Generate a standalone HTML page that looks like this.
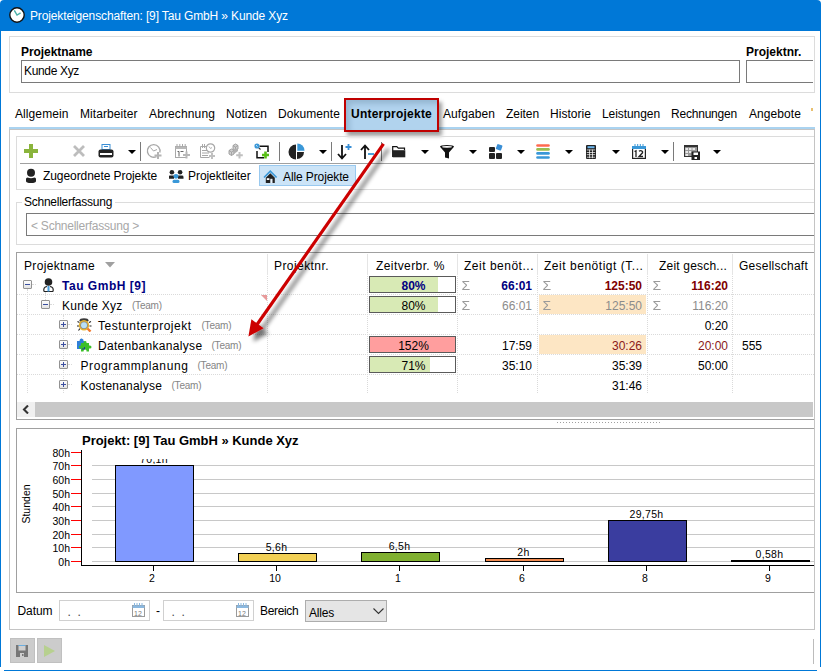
<!DOCTYPE html>
<html><head><meta charset="utf-8">
<style>
*{box-sizing:border-box;margin:0;padding:0}
html,body{width:821px;height:671px;overflow:hidden;background:#fff}
body{position:relative;font-family:"Liberation Sans",sans-serif;font-size:12px;color:#000}
.a{position:absolute}
.t{position:absolute;white-space:nowrap;line-height:14px}
.b{font-weight:bold}
.dd{position:absolute;width:0;height:0;border-left:4px solid transparent;border-right:4px solid transparent;border-top:4px solid #000}
.sep{position:absolute;width:1px;height:19px;background:#7a7a7a;top:142px}
.pb{position:absolute;width:9px;height:9px;border:1px solid #929292;background:linear-gradient(#fdfdfd,#e3e3e3);border-radius:1px}
.pb:before{content:"";position:absolute;left:1px;top:3px;width:5px;height:1px;background:#3b4fa0}
.pb.p:after{content:"";position:absolute;left:3px;top:1px;width:1px;height:5px;background:#3b4fa0}
.tm{position:absolute;white-space:nowrap;font-size:10px;color:#858585;line-height:12px}
.hd{position:absolute;top:254px;height:21px;width:1px;background:#e5e5e5}
.vd{position:absolute;width:1px;border-left:1px dotted #dadada}
.hdot{position:absolute;height:1px;border-top:1px dotted #dadada}
.gl{position:absolute;left:92px;width:722px;height:1px;background:#c8c8c8}
.yl{position:absolute;left:40px;width:30px;text-align:right;font-size:10.5px;line-height:12px}
.tk{position:absolute;left:71px;width:10px;height:1px;background:#ff0000}
.bar{position:absolute;border:1px solid #000}
.xl{position:absolute;top:572px;font-size:10.5px;line-height:12px;width:40px;text-align:center}
.vl{position:absolute;font-size:10.5px;line-height:12px;width:60px;text-align:center}
.xt{position:absolute;top:565px;width:1px;height:6px;background:#000}
.sg{position:absolute;font-size:14px;line-height:14px;color:#9a9a9a;transform:scaleY(0.93)}
</style></head>
<body>
<div class="a" style="left:0;top:0;width:821px;height:31px;background:#0078d7;border-radius:4px 4px 0 0"></div>
<svg class="a" style="left:8px;top:6px" width="18" height="18" viewBox="0 0 18 18"><circle cx="9" cy="9" r="7.2" fill="#fff" stroke="#111" stroke-width="1.4"/><path d="M6.3 4.4 L9 9.1 L12.6 6.8" fill="none" stroke="#4ab0a8" stroke-width="1.4"/></svg>
<div class="t" style="left:30px;top:9px;letter-spacing:-0.13px;color:#fff">Projekteigenschaften: [9] Tau GmbH » Kunde Xyz</div>
<div class="a" style="left:0;top:31px;width:1px;height:636px;background:#0078d7"></div>
<div class="a" style="left:820px;top:31px;width:1px;height:636px;background:#0078d7"></div>
<div class="a" style="left:4px;top:670px;width:813px;height:1px;background:#0078d7"></div>
<div class="a" style="left:813px;top:639px;width:1px;height:25px;background:#bcbcbc"></div>
<div class="a" style="left:9px;top:36px;width:806px;height:57px;border:1px solid #dcdcdc"></div>
<div class="t b" style="left:21px;top:45px;letter-spacing:-0.06px;">Projektname</div>
<div class="a" style="left:21px;top:60px;width:719px;height:23px;border:1px solid #7a7a7a"></div>
<div class="t" style="left:24px;top:64px;letter-spacing:-0.34px;">Kunde Xyz</div>
<div class="t b" style="left:746px;top:45px;">Projektnr.</div>
<div class="a" style="left:746px;top:60px;width:67px;height:23px;border:1px solid #7a7a7a;border-right:none"></div>
<div class="t" style="left:15px;top:107px;letter-spacing:0.09px;">Allgemein</div>
<div class="t" style="left:80px;top:107px;letter-spacing:0.07px;">Mitarbeiter</div>
<div class="t" style="left:149px;top:107px;letter-spacing:0.13px;">Abrechnung</div>
<div class="t" style="left:226px;top:107px;letter-spacing:0.04px;">Notizen</div>
<div class="t" style="left:278px;top:107px;letter-spacing:0.07px;">Dokumente</div>
<div class="t" style="left:443px;top:107px;letter-spacing:0.08px;">Aufgaben</div>
<div class="t" style="left:506px;top:107px;letter-spacing:-0.06px;">Zeiten</div>
<div class="t" style="left:550px;top:107px;letter-spacing:0.04px;">Historie</div>
<div class="t" style="left:602px;top:107px;letter-spacing:-0.07px;">Leistungen</div>
<div class="t" style="left:671px;top:107px;letter-spacing:-0.21px;">Rechnungen</div>
<div class="t" style="left:749px;top:107px;letter-spacing:0.08px;">Angebote</div>
<div class="a" style="left:811px;top:108px;width:2px;height:3px;background:#e8c070"></div>
<div class="a" style="left:9px;top:127px;width:806px;height:503px;border:1px solid #c4c4c4;border-top:3px solid #c4c4c4"></div><div class="a" style="left:9px;top:127px;width:806px;height:2px;background:#aad3f0"></div>
<div class="a" style="left:344px;top:98px;width:95px;height:34px;border:2px solid #c00000;background:#b1d3ee;box-shadow:3px 4px 4px rgba(0,0,0,.38), inset 4px 4px 5px rgba(60,90,120,.22)"></div>
<div class="t b" style="left:351px;top:107px;letter-spacing:0.23px;">Unterprojekte</div>
<div class="a" style="left:16px;top:136px;width:798px;height:54px;border:1px solid #dcdcdc;border-right:none"></div>
<div class="a" style="left:20px;top:163px;width:794px;height:1px;background:#a0a0a0"></div>
<svg class="a" style="left:24px;top:144px" width="14" height="14"><rect x="5" y="0" width="4" height="14" fill="#8ab43c"/><rect x="0" y="5" width="14" height="4" fill="#8ab43c"/></svg>
<svg class="a" style="left:73px;top:145px" width="12" height="12"><path d="M1 1L11 11M11 1L1 11" stroke="#bdbdbd" stroke-width="2.8"/></svg>
<svg class="a" style="left:98px;top:144px" width="16" height="15" viewBox="0 0 16 15"><rect x="4" y="0.5" width="8" height="5" fill="#fff" stroke="#3a8fd6" stroke-width="1"/><line x1="6" y1="2.5" x2="10" y2="2.5" stroke="#3a8fd6"/><rect x="0.5" y="5.5" width="15" height="8" rx="2" fill="#222"/><rect x="2" y="9" width="12" height="2" fill="#fff"/></svg>
<div class="dd" style="left:128px;top:150px"></div>
<div class="sep" style="left:140px"></div>
<svg class="a" style="left:146px;top:143px" width="16" height="16" viewBox="0 0 16 16"><path d="M10.5 13.6A6.3 6.3 0 1 1 13.8 9.5" fill="none" stroke="#a8a8a8" stroke-width="1.4"/><path d="M4.5 4.5L7.5 8L11 6.5" fill="none" stroke="#a8a8a8" stroke-width="1"/><path d="M12 9v7M8.5 12.5h7" stroke="#b4b4b4" stroke-width="2"/></svg>
<svg class="a" style="left:175px;top:143px" width="15" height="16" viewBox="0 0 15 16"><rect x="0.5" y="3.5" width="11" height="11" fill="#fff" stroke="#a8a8a8"/><rect x="0.5" y="3.5" width="11" height="2.5" fill="#b8b8b8"/><path d="M2 1v3M4.8 1v3M7.5 1v3M10.2 1v3" stroke="#a8a8a8"/><path d="M2.5 8.5h1.5v5M5.5 8.5h3" fill="none" stroke="#666" stroke-width="1"/><path d="M11.5 8.5v7M8 12h7" stroke="#b8b8b8" stroke-width="2"/></svg>
<svg class="a" style="left:200px;top:143px" width="16" height="16" viewBox="0 0 16 16"><path d="M0.5 3.5H9.5M0.5 3.5V14.5H9.5" fill="none" stroke="#a8a8a8"/><path d="M2.5 1v4M4.5 1v4" stroke="#a8a8a8"/><path d="M2 7.5h6M2 10h7M2 12.5h6" stroke="#a8a8a8"/><circle cx="10.5" cy="5" r="4.2" fill="#fff" stroke="#a8a8a8" stroke-width="1.2"/><path d="M9 3.5L10.5 5.5L12 4.5" fill="none" stroke="#a8a8a8" stroke-width="0.9"/><path d="M12 10v6M9 13h6" stroke="#c0c0c0" stroke-width="2"/></svg>
<svg class="a" style="left:228px;top:143px" width="15" height="16" viewBox="0 0 15 16"><path d="M5 2.5L7.5 1L10 2.5V6L7.5 7.5L5 6Z" fill="#d0d0d0" stroke="#9a9a9a" stroke-width="0.9"/><path d="M5 2.5L7.5 4L10 2.5M7.5 4V7.5" fill="none" stroke="#9a9a9a" stroke-width="0.8"/><path d="M1 7.5L3.5 6L6 7.5V11L3.5 12.5L1 11Z" fill="#d0d0d0" stroke="#9a9a9a" stroke-width="0.9"/><path d="M1 7.5L3.5 9L6 7.5M3.5 9V12.5" fill="none" stroke="#9a9a9a" stroke-width="0.8"/><path d="M5.5 6.5L8 5.5L10 6V8L6 11Z" fill="#b0b0b0"/><path d="M11.5 9v6.5M8.2 12.2h6.6" stroke="#c0c0c0" stroke-width="2"/></svg>
<svg class="a" style="left:254px;top:143px" width="16" height="16" viewBox="0 0 16 16"><path d="M5.5 3.2H14V9M10 14.8H3V8" fill="none" stroke="#111" stroke-width="1.5"/><circle cx="3" cy="3" r="2.6" fill="#3a98d8"/><path d="M2 2.2L3.5 3.5" stroke="#fff" stroke-width="0.8"/><path d="M4.8 4.8L6.5 6.5" stroke="#333" stroke-width="1.2"/><path d="M11.5 8.5v7M8 12h7" stroke="#5ac018" stroke-width="2.6"/></svg>
<div class="sep" style="left:279px"></div>
<svg class="a" style="left:288px;top:143px" width="17" height="17" viewBox="0 0 17 17"><path d="M8 9V16.5A7.5 7.5 0 0 1 8 1.5Z" fill="#222"/><path d="M9 9H16A7 7 0 0 1 9 16Z" fill="#222"/><path d="M9.3 7.7V0.5A7.2 7.2 0 0 1 16.5 7.7Z" fill="#3a98d8"/></svg>
<div class="dd" style="left:319px;top:150px"></div>
<div class="sep" style="left:331px"></div>
<svg class="a" style="left:337px;top:144px" width="15" height="16" viewBox="0 0 15 16"><path d="M5 1V14M1 10L5 14.5L9 10" fill="none" stroke="#111" stroke-width="1.8"/><path d="M11.5 0v6M8.5 3h6" stroke="#3a8fd6" stroke-width="1.8"/></svg>
<svg class="a" style="left:360px;top:144px" width="15" height="16" viewBox="0 0 15 16"><path d="M5 2V15M1 6L5 1.5L9 6" fill="none" stroke="#111" stroke-width="1.8"/><path d="M8 10h6" stroke="#3a98d8" stroke-width="1.8"/></svg>
<div class="sep" style="left:381px"></div>
<svg class="a" style="left:392px;top:145px" width="14" height="13" viewBox="0 0 14 13"><path d="M0.7 12V1.7H4.8L6.3 3.2H12.5V5" fill="none" stroke="#111" stroke-width="1.2"/><path d="M0.7 5.2H13.3V12.3H0.7Z" fill="#222"/></svg>
<div class="dd" style="left:421px;top:150px"></div>
<svg class="a" style="left:440px;top:145px" width="14" height="14" viewBox="0 0 14 14"><path d="M0 1.8Q0 0 7 0Q14 0 14 1.8L9 7.5V13.5L5 12.5V7.5Z" fill="#111"/><ellipse cx="7" cy="1.8" rx="5" ry="0.9" fill="#fff"/></svg>
<div class="dd" style="left:469px;top:150px"></div>
<svg class="a" style="left:489px;top:144px" width="14" height="15" viewBox="0 0 14 15"><rect x="0" y="3" width="6" height="5" rx="1" fill="#222"/><rect x="0" y="9" width="6" height="6" rx="1" fill="#222"/><rect x="7" y="9" width="6" height="6" rx="1" fill="#222"/><rect x="7.5" y="0.5" width="5.5" height="5.5" rx="1" fill="#3a8fd6" transform="rotate(20 10 3)"/></svg>
<div class="dd" style="left:517px;top:150px"></div>
<svg class="a" style="left:536px;top:144px" width="14" height="15" viewBox="0 0 14 15"><g stroke-width="2.6" stroke-linecap="round"><path d="M1.5 1.5H12.5" stroke="#ff6a50"/><path d="M1.5 5.4H12.5" stroke="#9abd50"/><path d="M1.5 9.4H12.5" stroke="#3a98d8"/><path d="M1.5 13.5H12.5" stroke="#3a98d8"/></g></svg>
<div class="dd" style="left:565px;top:150px"></div>
<svg class="a" style="left:586px;top:145px" width="10" height="14" viewBox="0 0 10 14"><rect x="0" y="0" width="10" height="14" rx="1" fill="#222"/><rect x="1.5" y="1.2" width="7" height="2" fill="#6ab4ec"/><g fill="#fff"><rect x="0.8" y="4.6" width="8.4" height="0.7"/><rect x="0.8" y="7" width="8.4" height="0.7"/><rect x="0.8" y="9.4" width="8.4" height="0.7"/><rect x="0.8" y="11.8" width="8.4" height="0.7"/><rect x="3.2" y="4.6" width="0.7" height="8.6"/><rect x="6.1" y="4.6" width="0.7" height="8.6"/></g></svg>
<div class="dd" style="left:612px;top:150px"></div>
<svg class="a" style="left:632px;top:144px" width="14" height="15" viewBox="0 0 14 15"><rect x="0.6" y="2.6" width="12.8" height="11.8" fill="#fff" stroke="#222" stroke-width="1.2"/><rect x="0" y="2" width="14" height="3" fill="#3a98d8"/><path d="M3 0v3M5.7 0v3M8.3 0v3M11 0v3" stroke="#3a98d8" stroke-width="1"/><path d="M2.5 7.5L4 6.8V13M7 7.3Q8 6.5 9.5 6.8Q11 7.3 10.5 8.8L7 12.5H11" fill="none" stroke="#222" stroke-width="1.3"/></svg>
<div class="dd" style="left:661px;top:150px"></div>
<div class="sep" style="left:673px"></div>
<svg class="a" style="left:684px;top:145px" width="16" height="15" viewBox="0 0 16 15"><rect x="0.5" y="0.5" width="13" height="11" fill="#9a9a9a" stroke="#333"/><rect x="0.5" y="0.5" width="13" height="1.6" fill="#333"/><g fill="#e8e8e8"><rect x="1.5" y="3" width="2.5" height="2"/><rect x="5" y="3" width="2.5" height="2"/><rect x="8.5" y="3" width="2.5" height="2"/><rect x="1.5" y="6" width="2.5" height="2"/><rect x="5" y="6" width="2.5" height="2"/><rect x="1.5" y="9" width="2.5" height="2"/></g><rect x="7.5" y="6.5" width="8.5" height="8.5" fill="#222"/><rect x="9.5" y="7.5" width="4.5" height="2.5" fill="#fff"/><rect x="10.5" y="12" width="2.5" height="2" fill="#fff"/></svg>
<div class="dd" style="left:713px;top:150px"></div>
<svg class="a" style="left:25px;top:168px" width="12" height="16" viewBox="0 0 12 16"><circle cx="6" cy="4.8" r="4" fill="#222"/><path d="M1 11Q1 9.8 2.5 9.6Q6 10.8 9.5 9.6Q11 9.8 11 11V13Q11 15 6 15Q1 15 1 13Z" fill="#222"/></svg>
<div class="t" style="left:43px;top:169px;letter-spacing:-0.07px;">Zugeordnete Projekte</div>
<svg class="a" style="left:169px;top:168px" width="15" height="15" viewBox="0 0 15 15"><circle cx="2.9" cy="4.2" r="2.3" fill="#222"/><circle cx="11.1" cy="4.2" r="2.3" fill="#222"/><path d="M-0.5 10.7V9Q-0.5 7.6 1 7.6H5V10.7Z M9 7.6H13Q14.5 7.6 14.5 9V10.7H9Z" fill="#222"/><circle cx="7" cy="8.3" r="2.4" fill="#3a98d8"/><path d="M3.5 13.5Q3.5 11.8 5 11.8H9Q10.5 11.8 10.5 13.5Q10.5 15 9 15H5Q3.5 15 3.5 13.5Z" fill="#3a98d8"/></svg>
<div class="t" style="left:188px;top:169px;letter-spacing:-0.06px;">Projektleiter</div>
<div class="a" style="left:259px;top:165px;width:97px;height:21px;background:#cce4f7;border:1px solid #99c9ef"></div>
<svg class="a" style="left:263px;top:170px" width="15" height="13" viewBox="0 0 15 13"><path d="M1 7.5L7.3 1.2L13.6 7.5" fill="none" stroke="#3a98d8" stroke-width="1.6"/><path d="M2.8 7.8L7.3 3.2L11.8 7.8V13H2.8Z" fill="#222"/><rect x="3.8" y="8.2" width="2.6" height="1.8" fill="#fff"/><rect x="7.3" y="8.8" width="2.2" height="4.2" fill="#e8f2fb"/></svg>
<div class="t" style="left:283px;top:170px;letter-spacing:-0.11px;">Alle Projekte</div>
<div class="a" style="left:16px;top:202px;width:798px;height:43px;border:1px solid #dcdcdc;border-right:none"></div>
<div class="a" style="left:22px;top:195px;width:93px;height:12px;background:#fff"></div>
<div class="t" style="left:24px;top:195px;letter-spacing:-0.25px;">Schnellerfassung</div>
<div class="a" style="left:26px;top:213px;width:788px;height:23px;border:1px solid #7a7a7a;border-right:none"></div>
<div class="t" style="left:31px;top:219px;letter-spacing:-0.24px;color:#a8a8a8">&lt; Schnellerfassung &gt;</div>
<div class="a" style="left:16px;top:252px;width:798px;height:168px;border:1px solid #a0a0a0;border-right:none"></div>
<div class="t" style="left:24px;top:259px;letter-spacing:0.33px;">Projektname</div>
<svg class="a" style="left:105px;top:262px" width="10" height="6"><path d="M0 0H10L5 5.5Z" fill="#a0a0a0"/></svg>
<div class="t" style="left:274px;top:259px;letter-spacing:0.43px;">Projektnr.</div>
<div class="t" style="left:376px;top:259px;letter-spacing:0.41px;">Zeitverbr. %</div>
<div class="t" style="left:464px;top:259px;letter-spacing:0.51px;">Zeit benöt...</div>
<div class="t" style="left:544px;top:259px;letter-spacing:0.53px;">Zeit benötigt (T...</div>
<div class="t" style="left:659px;top:259px;letter-spacing:0.20px;">Zeit gesch...</div>
<div class="t" style="left:739px;top:259px;letter-spacing:0.25px;">Gesellschaft</div>
<div class="hd" style="left:267px"></div>
<div class="vd" style="left:267px;top:276px;height:117px"></div>
<div class="hd" style="left:367px"></div>
<div class="vd" style="left:367px;top:276px;height:117px"></div>
<div class="hd" style="left:457px"></div>
<div class="vd" style="left:457px;top:276px;height:117px"></div>
<div class="hd" style="left:537px"></div>
<div class="vd" style="left:537px;top:276px;height:117px"></div>
<div class="hd" style="left:647px"></div>
<div class="vd" style="left:647px;top:276px;height:117px"></div>
<div class="hd" style="left:732px"></div>
<div class="vd" style="left:732px;top:276px;height:117px"></div>
<div class="hdot" style="left:17px;top:294px;width:797px"></div>
<div class="hdot" style="left:17px;top:314px;width:797px"></div>
<div class="hdot" style="left:17px;top:334px;width:797px"></div>
<div class="hdot" style="left:17px;top:354px;width:797px"></div>
<div class="hdot" style="left:17px;top:374px;width:797px"></div>
<div class="a" style="left:539px;top:295px;width:107px;height:19px;background:#fde6c4"></div>
<div class="a" style="left:539px;top:335px;width:107px;height:19px;background:#fde6c4"></div>
<div class="vd" style="left:27px;top:289px;height:104px"></div>
<div class="vd" style="left:45px;top:292px;height:8px"></div>
<div class="vd" style="left:63px;top:315px;height:78px"></div>
<div class="hdot" style="left:32px;top:284px;width:4px"></div>
<div class="hdot" style="left:50px;top:304px;width:4px"></div>
<div class="pb p" style="left:59px;top:320px"></div>
<div class="hdot" style="left:68px;top:324px;width:4px"></div>
<div class="pb p" style="left:59px;top:340px"></div>
<div class="hdot" style="left:68px;top:344px;width:4px"></div>
<div class="pb p" style="left:59px;top:360px"></div>
<div class="hdot" style="left:68px;top:364px;width:4px"></div>
<div class="pb p" style="left:59px;top:380px"></div>
<div class="hdot" style="left:68px;top:384px;width:4px"></div>
<div class="pb" style="left:23px;top:280px"></div>
<div class="pb" style="left:41px;top:300px"></div>
<svg class="a" style="left:43px;top:278px" width="11" height="14" viewBox="0 0 11 14"><circle cx="5.5" cy="4" r="3.8" fill="#222"/><path d="M1 13.5Q0 9 4 8.5M10 13.5Q11 9 7 8.5" fill="none" stroke="#222" stroke-width="1.2"/><path d="M1 13.5H10" stroke="#222" stroke-width="1"/><rect x="4.5" y="8" width="2" height="5.5" fill="#4aa0e0"/></svg>
<svg class="a" style="left:77px;top:318px" width="15" height="14" viewBox="0 0 15 14"><path d="M0.5 3.5L2.5 4.5M0 8H2M1.5 12.5L3 10.5M14 3.5L12 4.5M14.5 8H12.5" stroke="#222" stroke-width="1.1"/><ellipse cx="7" cy="2.2" rx="4.5" ry="2" fill="#3a3a3a"/><circle cx="7" cy="7.3" r="5.2" fill="#e8b430"/><circle cx="7" cy="7.3" r="3.8" fill="#8a8a8a"/><circle cx="7" cy="7.3" r="3" fill="#b8e0f8"/><path d="M10.5 10.5L13.5 13.5" stroke="#f07a30" stroke-width="2.4"/></svg>
<svg class="a" style="left:77px;top:338px" width="15" height="14" viewBox="0 0 15 14"><path d="M0 3H2.5Q2.5 0 4.8 0.5Q7 1 6.5 3H7.5V11H0Z" fill="#2f7fd8"/><path d="M4 5H6.5Q6.5 2.5 8.5 3Q10 3.5 9.5 5H12V7.5Q14.5 7 14.5 9Q14.5 11 12 10.5V13.5H9.5Q10 11.5 8 11.5Q6.5 11.5 6.5 13.5H4V10.5Q2 11 2 9Q2 7 4 7.5Z" fill="#3cc02a"/><path d="M5 11H7.5V9" fill="none" stroke="#1a3aa0" stroke-width="1"/></svg>
<div class="t b" style="left:62px;top:279px;letter-spacing:0.52px;color:#000080">Tau GmbH [9]</div>
<div class="t" style="left:62px;top:299px;letter-spacing:0.29px;">Kunde Xyz</div>
<div class="tm" style="left:132px;top:300px;letter-spacing:-0.22px;">(Team)</div>
<svg class="a" style="left:261px;top:295px" width="6" height="6"><path d="M0 0H6V6Z" fill="#e89a9a"/></svg>
<div class="t" style="left:98px;top:319px;letter-spacing:0.51px;">Testunterprojekt</div>
<div class="tm" style="left:201.5px;top:320px;letter-spacing:-0.22px;">(Team)</div>
<div class="t" style="left:98px;top:339px;letter-spacing:0.31px;">Datenbankanalyse</div>
<div class="tm" style="left:211.5px;top:340px;letter-spacing:-0.22px;">(Team)</div>
<div class="t" style="left:80.5px;top:359px;letter-spacing:0.62px;">Programmplanung</div>
<div class="tm" style="left:197.5px;top:360px;letter-spacing:-0.22px;">(Team)</div>
<div class="t" style="left:80.5px;top:379px;letter-spacing:0.22px;">Kostenanalyse</div>
<div class="tm" style="left:171.5px;top:380px;letter-spacing:-0.22px;">(Team)</div>
<div class="a" style="left:369px;top:276px;width:87px;height:17px;border:1px solid #5a5a5a;background:#fff"><div class="a" style="left:0;top:0;width:68px;height:15px;background:#d8eab5"></div></div>
<div class="t" style="left:371px;top:279px;width:85px;text-align:center;color:#000080;font-weight:bold">80%</div>
<div class="a" style="left:369px;top:296px;width:87px;height:17px;border:1px solid #5a5a5a;background:#fff"><div class="a" style="left:0;top:0;width:68px;height:15px;background:#d8eab5"></div></div>
<div class="t" style="left:371px;top:299px;width:85px;text-align:center;color:#000;">80%</div>
<div class="a" style="left:369px;top:336px;width:87px;height:17px;border:1px solid #5a5a5a;background:#fff"><div class="a" style="left:0;top:0;width:85px;height:15px;background:#ff9e9e"></div></div>
<div class="t" style="left:371px;top:339px;width:85px;text-align:center;color:#000;">152%</div>
<div class="a" style="left:369px;top:356px;width:87px;height:17px;border:1px solid #5a5a5a;background:#fff"><div class="a" style="left:0;top:0;width:60px;height:15px;background:#d8eab5"></div></div>
<div class="t" style="left:371px;top:359px;width:85px;text-align:center;color:#000;">71%</div>
<div class="sg" style="left:461.5px;top:278px">Σ</div>
<div class="sg" style="left:542.5px;top:278px">Σ</div>
<div class="sg" style="left:652.5px;top:278px">Σ</div>
<div class="sg" style="left:461.5px;top:298px">Σ</div>
<div class="sg" style="left:542.5px;top:298px">Σ</div>
<div class="sg" style="left:652.5px;top:298px">Σ</div>
<div class="t" style="left:432px;top:279px;width:100px;text-align:right;color:#000080;font-weight:bold">66:01</div>
<div class="t" style="left:542px;top:279px;width:100px;text-align:right;color:#800000;font-weight:bold">125:50</div>
<div class="t" style="left:628px;top:279px;width:100px;text-align:right;color:#800000;font-weight:bold">116:20</div>
<div class="t" style="left:432px;top:299px;width:100px;text-align:right;color:#8c8c8c;">66:01</div>
<div class="t" style="left:542px;top:299px;width:100px;text-align:right;color:#8c8c8c;">125:50</div>
<div class="t" style="left:628px;top:299px;width:100px;text-align:right;color:#8c8c8c;">116:20</div>
<div class="t" style="left:628px;top:319px;width:100px;text-align:right;color:#000;">0:20</div>
<div class="t" style="left:432px;top:339px;width:100px;text-align:right;color:#000;">17:59</div>
<div class="t" style="left:542px;top:339px;width:100px;text-align:right;color:#8b1a1a;">30:26</div>
<div class="t" style="left:628px;top:339px;width:100px;text-align:right;color:#8b1a1a;">20:00</div>
<div class="t" style="left:742px;top:339px;">555</div>
<div class="t" style="left:432px;top:359px;width:100px;text-align:right;color:#000;">35:10</div>
<div class="t" style="left:542px;top:359px;width:100px;text-align:right;color:#000;">35:39</div>
<div class="t" style="left:628px;top:359px;width:100px;text-align:right;color:#000;">50:00</div>
<div class="t" style="left:542px;top:379px;width:100px;text-align:right;color:#000;">31:46</div>
<div class="a" style="left:17px;top:402px;width:796px;height:15px;background:#c8c8c8"></div>
<div class="a" style="left:17px;top:402px;width:18px;height:15px;background:#f0f0f0"></div>
<svg class="a" style="left:22px;top:405px" width="8" height="9"><path d="M6 0.5L2 4.5L6 8.5" fill="none" stroke="#333" stroke-width="2.1"/></svg>
<div class="a" style="left:557px;top:422px;width:104px;height:1px;background:repeating-linear-gradient(90deg,#a0a0a0 0 1px,transparent 1px 3px)"></div>
<div class="a" style="left:16px;top:428px;width:798px;height:165px;border:1px solid #a0a0a0;border-right:none"></div>
<div class="tk" style="top:452px"></div>
<div class="yl" style="top:447px">80h</div>
<div class="gl" style="top:465px"></div>
<div class="tk" style="top:465px"></div>
<div class="yl" style="top:460px">70h</div>
<div class="gl" style="top:479px"></div>
<div class="tk" style="top:479px"></div>
<div class="yl" style="top:474px">60h</div>
<div class="gl" style="top:493px"></div>
<div class="tk" style="top:493px"></div>
<div class="yl" style="top:488px">50h</div>
<div class="gl" style="top:506px"></div>
<div class="tk" style="top:506px"></div>
<div class="yl" style="top:501px">40h</div>
<div class="gl" style="top:520px"></div>
<div class="tk" style="top:520px"></div>
<div class="yl" style="top:515px">30h</div>
<div class="gl" style="top:534px"></div>
<div class="tk" style="top:534px"></div>
<div class="yl" style="top:529px">20h</div>
<div class="gl" style="top:547px"></div>
<div class="tk" style="top:547px"></div>
<div class="yl" style="top:542px">10h</div>
<div class="gl" style="top:561px"></div>
<div class="tk" style="top:561px"></div>
<div class="yl" style="top:556px">0h</div>
<div class="a" style="left:81px;top:450px;width:1px;height:116px;background:#000"></div>
<div class="a" style="left:81px;top:565px;width:733px;height:1px;background:#000"></div>
<div class="t" style="left:6px;top:498px;width:40px;text-align:center;font-size:10.5px;line-height:12px;transform:rotate(-90deg)">Stunden</div>
<div class="bar" style="left:115px;top:465px;width:79px;height:97px;background:#8099ff"></div>
<div class="a" style="left:124px;top:459px;width:60px;height:5px;overflow:hidden"><div class="vl" style="left:0;top:-6px;letter-spacing:0.3px">70,1h</div></div>
<div class="xt" style="left:153px"></div>
<div class="xl" style="left:132.0px">2</div>
<div class="bar" style="left:238px;top:553px;width:79px;height:9px;background:#f2d055"></div>
<div class="vl" style="left:246.5px;top:541px;letter-spacing:0.3px">5,6h</div>
<div class="xt" style="left:276px"></div>
<div class="xl" style="left:255.0px">10</div>
<div class="bar" style="left:361px;top:552px;width:79px;height:10px;background:#80b030"></div>
<div class="vl" style="left:369.5px;top:540px;letter-spacing:0.3px">6,5h</div>
<div class="xt" style="left:399px"></div>
<div class="xl" style="left:378.0px">1</div>
<div class="bar" style="left:485px;top:558px;width:79px;height:4px;background:#f08a50"></div>
<div class="vl" style="left:493.5px;top:546px;letter-spacing:0.3px">2h</div>
<div class="xt" style="left:523px"></div>
<div class="xl" style="left:502.0px">6</div>
<div class="bar" style="left:608px;top:520px;width:79px;height:42px;background:#3a3d9f"></div>
<div class="vl" style="left:616.5px;top:508px;letter-spacing:0.3px">29,75h</div>
<div class="xt" style="left:646px"></div>
<div class="xl" style="left:625.0px">8</div>
<div class="bar" style="left:731px;top:560px;width:79px;height:2px;background:#000"></div>
<div class="vl" style="left:739.5px;top:548px;letter-spacing:0.3px">0,58h</div>
<div class="xt" style="left:769px"></div>
<div class="xl" style="left:748.0px">9</div>
<div class="t b" style="left:82px;top:432.5px;letter-spacing:-0.02px;font-size:13px;line-height:15px">Projekt: [9] Tau GmbH » Kunde Xyz</div>
<div class="t" style="left:17.5px;top:604px;letter-spacing:-0.07px;">Datum</div>
<div class="a" style="left:59px;top:600px;width:91px;height:21px;border:1px solid #d0d0d0"></div>
<div class="t" style="left:67.5px;top:605px;color:#444">.&nbsp;&nbsp;.</div>
<svg class="a" style="left:132px;top:603px" width="13" height="14" viewBox="0 0 13 14"><rect x="0.5" y="2.5" width="12" height="11" fill="#fff" stroke="#9a9a9a"/><rect x="0.5" y="2.5" width="12" height="2.5" fill="#8ab8e0"/><path d="M2.5 0v3M5 0v3M7.5 0v3M10 0v3" stroke="#8ab8e0"/><text x="2" y="12.5" font-size="7" fill="#7a7a7a" font-family="Liberation Sans">12</text></svg>
<div class="a" style="left:163px;top:600px;width:91px;height:21px;border:1px solid #d0d0d0"></div>
<div class="t" style="left:171.5px;top:605px;color:#444">.&nbsp;&nbsp;.</div>
<svg class="a" style="left:236px;top:603px" width="13" height="14" viewBox="0 0 13 14"><rect x="0.5" y="2.5" width="12" height="11" fill="#fff" stroke="#9a9a9a"/><rect x="0.5" y="2.5" width="12" height="2.5" fill="#8ab8e0"/><path d="M2.5 0v3M5 0v3M7.5 0v3M10 0v3" stroke="#8ab8e0"/><text x="2" y="12.5" font-size="7" fill="#7a7a7a" font-family="Liberation Sans">12</text></svg>
<div class="t" style="left:156px;top:604px;">-</div>
<div class="t" style="left:260px;top:604px;letter-spacing:-0.33px;">Bereich</div>
<div class="a" style="left:305px;top:600px;width:82px;height:22px;border:1px solid #adadad;background:#e5e5e5"></div>
<div class="t" style="left:309px;top:606px;letter-spacing:-0.20px;">Alles</div>
<svg class="a" style="left:373px;top:608px" width="11" height="7"><path d="M0.5 0.5L5.5 5.5L10.5 0.5" fill="none" stroke="#333" stroke-width="1.1"/></svg>
<div class="a" style="left:10px;top:638px;width:25px;height:25px;background:#cccccc;border:1px solid #c0c0c0"></div>
<div class="a" style="left:37px;top:638px;width:25px;height:25px;background:#cccccc;border:1px solid #c0c0c0"></div>
<svg class="a" style="left:16px;top:645px" width="12" height="12" viewBox="0 0 12 12"><path d="M0 0H12V12H0Z" fill="#777"/><rect x="2.5" y="0.5" width="7" height="5" fill="#cfcfcf"/><rect x="2.5" y="0" width="7" height="1" fill="#6aaee0"/><rect x="4" y="8" width="4" height="4" fill="#cfcfcf"/><rect x="6" y="9" width="1.5" height="2" fill="#777"/></svg>
<svg class="a" style="left:44px;top:645px" width="11" height="12" viewBox="0 0 11 12"><path d="M0 0L11 6L0 12Z" fill="#b7d08f"/></svg>
<svg class="a" style="left:0;top:0" width="821" height="671" viewBox="0 0 821 671">
<defs><filter id="sh" x="-20%" y="-20%" width="140%" height="140%"><feGaussianBlur in="SourceAlpha" stdDeviation="2.2"/><feOffset dx="5" dy="5"/><feComponentTransfer><feFuncA type="linear" slope="0.55"/></feComponentTransfer><feMerge><feMergeNode/><feMergeNode in="SourceGraphic"/></feMerge></filter></defs>
<g filter="url(#sh)"><path d="M383.5 143.8 L256 326" stroke="#cc0000" stroke-width="3.2" fill="none"/><path d="M248.4 336.5 L251.4 319.3 L263.6 328.3 Z" fill="#cc0000"/></g>
</svg>
</body></html>
